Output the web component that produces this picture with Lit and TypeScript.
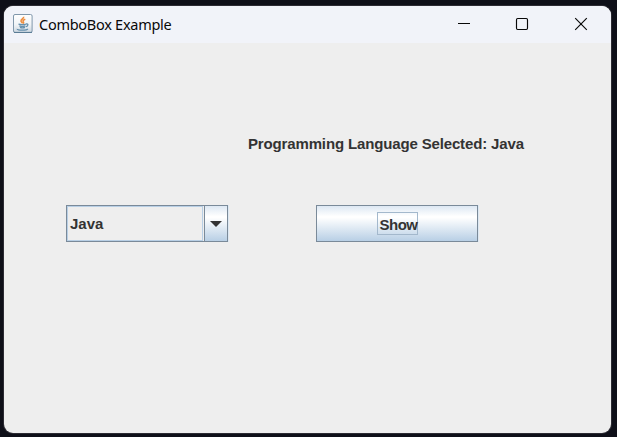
import { LitElement, html, css, svg } from "lit";
import { customElement, property } from "lit/decorators.js";

@customElement("title-bar")
class TitleBar extends LitElement {
  @property() caption = "";
  static styles = css`
    :host { display: flex; height: 37px; background: #f1f3f9; box-sizing: border-box; color: #090909; }
    .logo { width: 20px; height: 20px; margin: 8px 6px 0 9px; flex: none; }
    .caption { flex: 1; font: 14.5px/20px "Noto Sans", sans-serif; letter-spacing: -0.27px; padding-top: 8px; white-space: nowrap; }
    .controls { display: flex; width: 176px; flex: none; }
    .control { width: 58px; height: 36px; display: flex; justify-content: center; flex: none; }
    .control:last-child { width: 60px; }
    .glyph { width: 14px; height: 14px; margin-top: 11px; fill: none; stroke: #080808; }
  `;
  render() {
    const glyphs = [
      svg`<path d="M1 6.5H13" shape-rendering="crispEdges"/>`,
      svg`<rect x="1.5" y="1.5" width="11" height="11" rx="1.2" stroke-width="1.15"/>`,
      svg`<path d="M1.2 1.2L12.8 12.8M12.8 1.2L1.2 12.8" stroke-width="1.15"/>`,
    ];
    return html`
      <svg class="logo" viewBox="0 0 20 20">
        <defs><linearGradient id="tile" x2="0" y2="1"><stop stop-color="#fff"/><stop offset=".55" stop-color="#f1f4f7"/><stop offset="1" stop-color="#cbd6e0"/></linearGradient></defs>
        <rect x=".5" y=".5" width="18.6" height="18" rx="1.5" fill="url(#tile)" stroke="#8097ab"/>
        <path d="M1 18.4H19" stroke="#567993"/>
        <path d="M10.6 2.7C11.2 4.6 7.5 5.2 8 7.2C8.2 8.2 9.4 8.6 9.3 9.5M12.3 5.3C10 6.2 9.5 6.9 10.4 7.9C10.9 8.6 10.8 9 10.2 9.6" fill="none" stroke="#ee8c3c" stroke-width="1.5"/>
        <path d="M5.5 10.2C7.5 10.8 11 10.7 12.9 10.1M6.4 11.8C8 12.5 10.8 12.5 12.4 11.8M7 13.4C8.5 14 10.5 14 12 13.4M13 10C15.8 9.6 15.2 12.1 12.9 12.7M4.2 14.8C3.8 16.6 13.8 16.6 14.8 14.9" fill="none" stroke="#6690ad" stroke-width="1.3"/>
      </svg>
      <div class="caption">${this.caption}</div>
      <div class="controls">${glyphs.map((g) => html`<div class="control"><svg class="glyph" viewBox="0 0 14 14">${g}</svg></div>`)}</div>
    `;
  }
}

@customElement("app-root")
class AppRoot extends LitElement {
  static styles = css`
    :host { display: block; box-sizing: border-box; width: 617px; height: 437px; padding: 6px 6px 4px 4px; background: #0e0f18; overflow: hidden; }
    .window { height: 427px; border-radius: 9px; overflow: hidden; background: #eee; box-shadow: 0 0 0 1px #2c2b33; }
    .content { font: bold 15px/18px "Liberation Sans", Arial, sans-serif; color: #333; }
    .message { padding: 92px 0 0 244px; white-space: nowrap; letter-spacing: -0.145px; }
    .row { display: flex; gap: 88px; padding: 52px 0 0 62px; }
    .combo, .show { box-sizing: border-box; width: 162px; height: 37px; border: 1px solid #7a8a99; display: flex; box-shadow: 1px 0 #dce8f3; }
    .value { flex: 1; border: 1px solid #b8cfe5; margin-right: 1px; padding: 8px 0 0 2px; }
    .arrow { width: 22px; border-left: 1px solid #7a8a99; display: flex; align-items: center; justify-content: center; }
    .arrow, .show { background: linear-gradient(#dde8f3, #fff 30%, #fff 33%, #b8cfe5); }
    .triangle { width: 12px; height: 6px; fill: #333; margin-top: 1px; }
    .show { align-items: flex-start; justify-content: center; }
    .focus { box-sizing: border-box; width: 41px; height: 23px; border: 1px solid #a3b8cc; margin-top: 6px; padding: 3px 0 0 2px; white-space: nowrap; letter-spacing: -0.5px; }
  `;
  render() {
    return html`
      <div class="window">
        <title-bar caption="ComboBox Example"></title-bar>
        <div class="content">
          <div class="message">Programming Language Selected: Java</div>
          <div class="row">
            <div class="combo">
              <div class="value">Java</div>
              <div class="arrow"><svg class="triangle" viewBox="0 0 12 6"><path d="M0 0H12L6 6Z"/></svg></div>
            </div>
            <div class="show"><div class="focus">Show</div></div>
          </div>
        </div>
      </div>
    `;
  }
}
